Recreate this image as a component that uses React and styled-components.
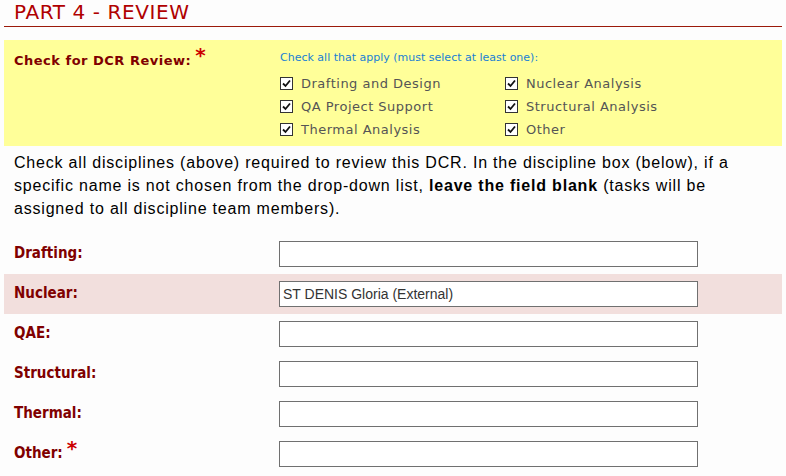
import React from 'react'
import styled, { createGlobalStyle } from 'styled-components'

const GlobalStyle = createGlobalStyle`
  html, body {
    margin: 0;
    padding: 0;
    background: #fdfdfd;
  }
`

const Page = styled.div`
  padding: 0 4px;
  width: 778px;
  font-family: "DejaVu Sans", Verdana, sans-serif;
`

const Heading = styled.h2`
  margin: 0;
  padding: 1px 0 3px 10px;
  font-size: 20px;
  line-height: 22px;
  letter-spacing: 0.6px;
  font-weight: normal;
  color: #b00000;
  border-bottom: 1px solid #9b1a0a;
`

const ReviewPanel = styled.div`
  margin-top: 13px;
  background: #ffff99;
  display: grid;
  grid-template-columns: 266px 1fr;
  height: 106px;
  box-sizing: border-box;
  padding: 11px 0 0 10px;
`

const PanelLabel = styled.div`
  font-weight: bold;
  font-size: 13px;
  letter-spacing: 0.5px;
  color: #800000;
  padding-top: 2px;
`

const Required = styled.span`
  color: #cc0000;
  font-family: "DejaVu Sans", sans-serif;
  font-size: 20px;
  font-weight: bold;
  letter-spacing: 0;
  position: relative;
  top: -3px;
  margin-left: 4px;
  line-height: 0;
`

const Hint = styled.div`
  font-size: 11px;
  color: #1a7fd4;
  margin-bottom: 8px;
`

const CheckGrid = styled.div`
  display: grid;
  grid-template-columns: 225px 225px;
  grid-auto-rows: 23px;
`

const CheckItem = styled.label`
  display: flex;
  align-items: center;
  gap: 8px;
  font-size: 13px;
  letter-spacing: 0.5px;
  color: #555555;
`

const Box = styled.span`
  width: 11px;
  height: 11px;
  border: 1px solid #333;
  background: #fff;
  display: flex;
  align-items: center;
  justify-content: center;
  flex-shrink: 0;
`

const Instructions = styled.p`
  margin: 5px 0 0;
  padding: 0 10px;
  font-family: "Liberation Sans", Arial, sans-serif;
  font-size: 16px;
  line-height: 23px;
  letter-spacing: 0.8px;
  white-space: nowrap;
  color: #000;
`

const Rows = styled.div`
  margin-top: 14px;
`

const Row = styled.div`
  display: grid;
  grid-template-columns: 265px 419px;
  align-items: center;
  height: 40px;
  padding-left: 10px;
  background: ${p => (p.$highlight ? '#f2dfdd' : 'transparent')};
`

const RowLabel = styled.div`
  font-family: "DejaVu Sans Condensed", "DejaVu Sans", sans-serif;
  font-weight: bold;
  font-size: 15px;
  color: #800000;
  padding-bottom: 3px;
`

const Field = styled.div`
  height: 26px;
  box-sizing: border-box;
  border: 1px solid #707070;
  background: #fff;
  font-family: "Liberation Sans", Arial, sans-serif;
  font-size: 14px;
  color: #333;
  display: flex;
  align-items: center;
  padding-left: 3px;
`

const Check = () => (
  <Box>
    <svg width="9" height="9" viewBox="0 0 9 9">
      <path d="M1 4.5 L3.5 7 L8 1.5" fill="none" stroke="#111" strokeWidth="1.8" />
    </svg>
  </Box>
)

const options = [
  'Drafting and Design',
  'Nuclear Analysis',
  'QA Project Support',
  'Structural Analysis',
  'Thermal Analysis',
  'Other',
]

const fields = [
  { label: 'Drafting:' },
  { label: 'Nuclear:', value: 'ST DENIS Gloria (External)', highlight: true },
  { label: 'QAE:' },
  { label: 'Structural:' },
  { label: 'Thermal:' },
  { label: 'Other:', required: true },
]

export default function App() {
  return (
    <Page>
      <GlobalStyle />
      <Heading>PART 4 - REVIEW</Heading>
      <ReviewPanel>
        <PanelLabel>
          Check for DCR Review:<Required>*</Required>
        </PanelLabel>
        <div>
          <Hint>Check all that apply (must select at least one):</Hint>
          <CheckGrid>
            {options.map(o => (
              <CheckItem key={o}>
                <Check />
                {o}
              </CheckItem>
            ))}
          </CheckGrid>
        </div>
      </ReviewPanel>
      <Instructions>
        Check all disciplines (above) required to review this DCR. In the discipline box (below), if a
        <br />
        specific name is not chosen from the drop-down list, <b>leave the field blank</b> (tasks will be
        <br />
        assigned to all discipline team members).
      </Instructions>
      <Rows>
        {fields.map(f => (
          <Row key={f.label} $highlight={f.highlight}>
            <RowLabel>
              {f.label}
              {f.required && <Required>*</Required>}
            </RowLabel>
            <Field>{f.value}</Field>
          </Row>
        ))}
      </Rows>
    </Page>
  )
}
